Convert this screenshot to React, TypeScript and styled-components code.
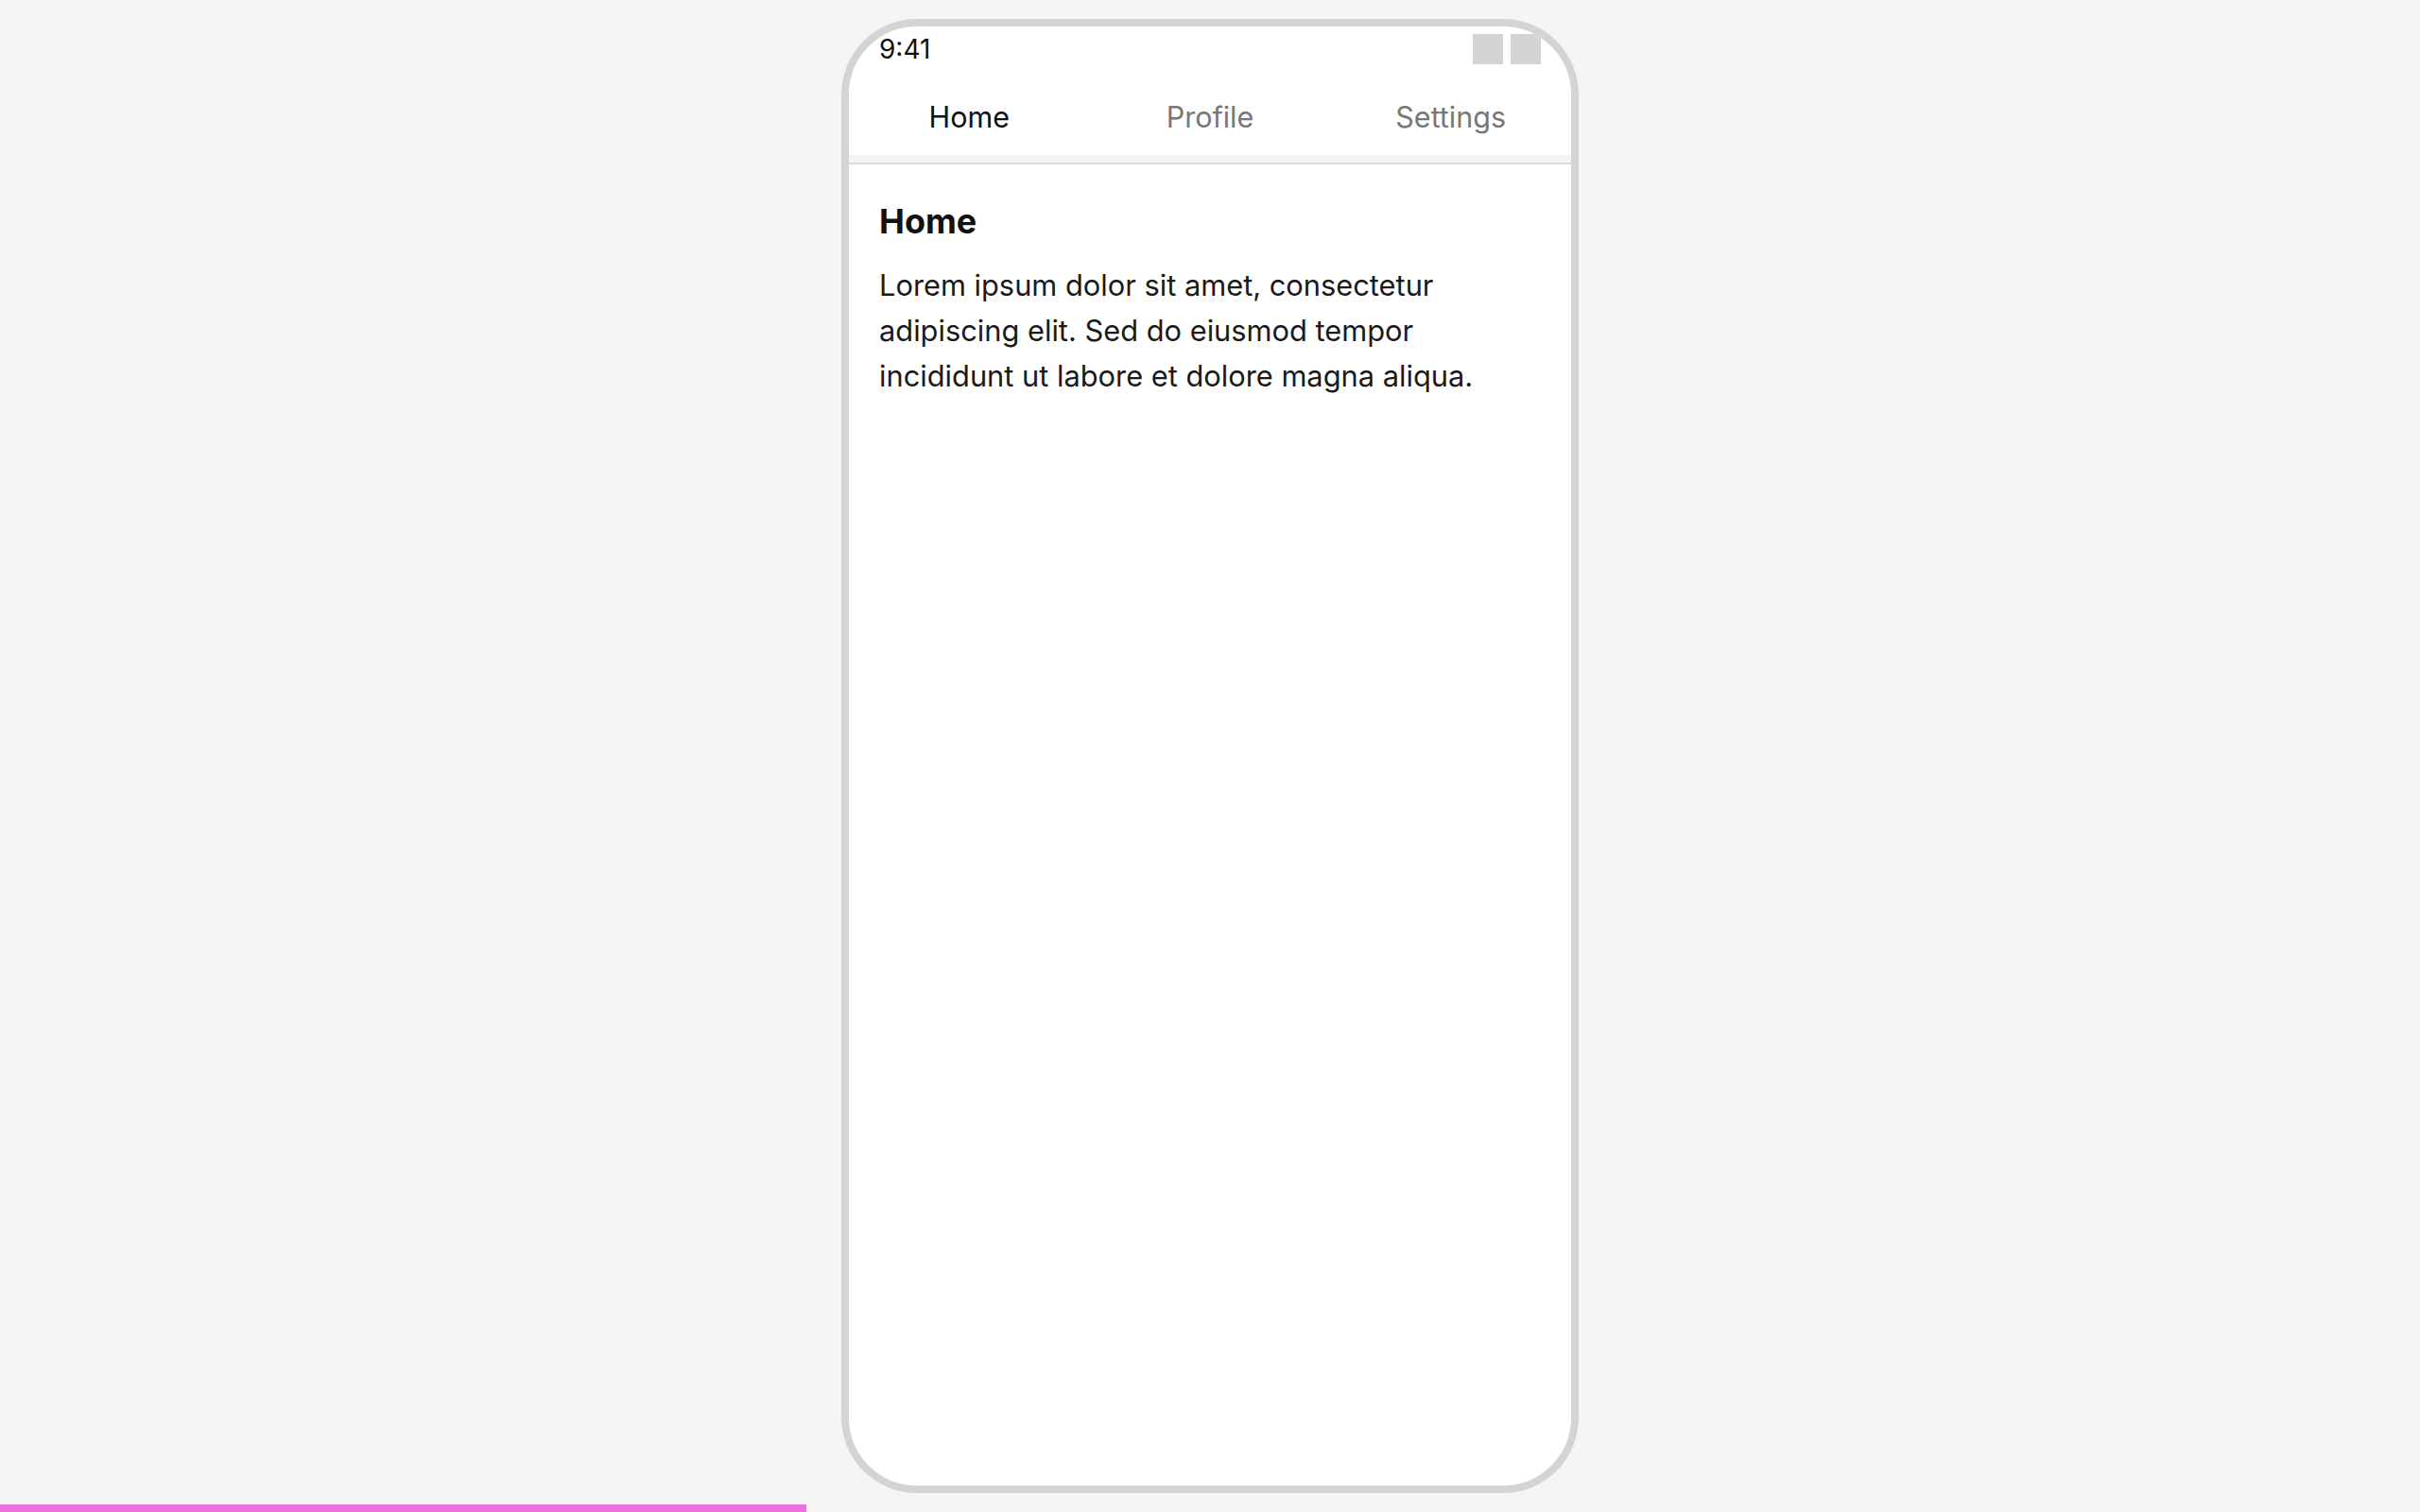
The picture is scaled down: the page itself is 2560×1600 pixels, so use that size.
import React, { useState } from 'react';
import styled, { createGlobalStyle } from 'styled-components';

const GlobalStyle = createGlobalStyle`
  html, body {
    margin: 0;
    padding: 0;
    height: 100%;
    background: #f5f5f5;
    font-family: Inter, "Noto Sans", "Liberation Sans", sans-serif;
    overflow: hidden;
  }
  #root {
    height: 100%;
  }
`;

const Page = styled.div`
  display: flex;
  justify-content: center;
  box-sizing: border-box;
  height: 100vh;
  padding: 20px 0;
`;

const Phone = styled.div`
  display: flex;
  flex-direction: column;
  box-sizing: border-box;
  width: 780px;
  height: 1560px;
  background: #fff;
  border: 8px solid #d4d4d4;
  border-radius: 80px;
  overflow: hidden;
`;

const StatusBar = styled.div`
  display: flex;
  align-items: center;
  justify-content: space-between;
  height: 48px;
  padding: 0 32px;
  flex-shrink: 0;
`;

const Clock = styled.span`
  font-size: 28px;
  color: #111;
`;

const StatusIcons = styled.div`
  display: flex;
  gap: 8px;
`;

const StatusIcon = styled.span`
  width: 32px;
  height: 32px;
  background: #d4d4d4;
`;

const TabNav = styled.nav`
  display: flex;
  flex-direction: column;
  border-bottom: 2px solid #dcdcdc;
  flex-shrink: 0;
`;

const TabRow = styled.div`
  display: flex;
`;

const Tab = styled.button<{ $active: boolean }>`
  flex: 1;
  border: none;
  background: none;
  padding: 30px 0 22px;
  font-family: inherit;
  font-size: 30.5px;
  line-height: 36px;
  color: ${({ $active }) => ($active ? '#111' : '#777')};
  cursor: pointer;
`;

const ScrollTrack = styled.div`
  height: 8px;
  background: #f5f5f5;
`;

const Content = styled.main`
  padding: 39px 32px 32px;
  color: #111;
`;

const Heading = styled.h2`
  margin: 0 0 22px;
  font-size: 36px;
  line-height: 43px;
  font-weight: 700;
`;

const Text = styled.p`
  margin: 0;
  font-size: 30.8px;
  line-height: 48px;
  color: #1a1a1a;
`;

const Progress = styled.div`
  position: fixed;
  left: 0;
  bottom: 0;
  width: 33.333%;
  height: 8px;
  background: #ec72d9;
`;

const tabs = ['Home', 'Profile', 'Settings'];

const App = () => {
  const [active, setActive] = useState('Home');

  return (
    <>
      <GlobalStyle />
      <Page>
        <Phone>
          <StatusBar>
            <Clock>9:41</Clock>
            <StatusIcons>
              <StatusIcon />
              <StatusIcon />
            </StatusIcons>
          </StatusBar>
          <TabNav>
            <TabRow>
              {tabs.map(t => (
                <Tab key={t} $active={t === active} onClick={() => setActive(t)}>
                  {t}
                </Tab>
              ))}
            </TabRow>
            <ScrollTrack />
          </TabNav>
          <Content>
            <Heading>{active}</Heading>
            <Text>
              Lorem ipsum dolor sit amet, consectetur adipiscing elit. Sed do eiusmod tempor
              incididunt ut labore et dolore magna aliqua.
            </Text>
          </Content>
        </Phone>
      </Page>
      <Progress />
    </>
  );
};

export default App;
